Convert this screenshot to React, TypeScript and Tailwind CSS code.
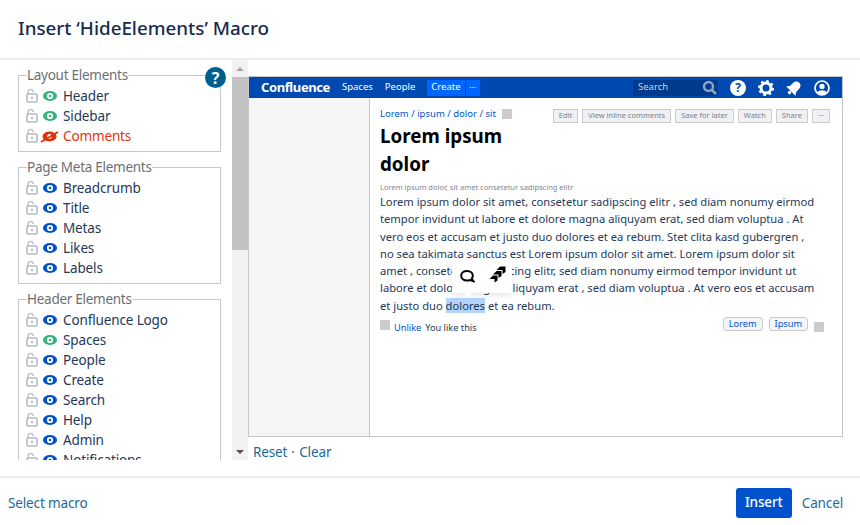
import React from 'react';

const layoutItems = [
    { label: 'Header', state: 'green' },
    { label: 'Sidebar', state: 'green' },
    { label: 'Comments', state: 'off' },
];
const metaItems = ['Breadcrumb', 'Title', 'Metas', 'Likes', 'Labels'].map(label => ({ label, state: 'blue' }));
const headerItems = [
    { label: 'Confluence Logo', state: 'blue' },
    { label: 'Spaces', state: 'green' },
    { label: 'People', state: 'blue' },
    { label: 'Create', state: 'blue' },
    { label: 'Search', state: 'blue' },
    { label: 'Help', state: 'blue' },
    { label: 'Admin', state: 'blue' },
    { label: 'Notifications', state: 'blue' },
];

function LockIcon() {
    return (
        <svg width="12" height="14" viewBox="0 0 12 14" fill="none" className="shrink-0">
            <path d="M2 5V3a2.6 2.6 0 0 1 5.200 0" stroke="#b3bac5" strokeWidth="1.300" />
            <rect x="1" y="5" width="10" height="8" rx="1" stroke="#b3bac5" strokeWidth="1.600" />
            <rect x="5" y="8" width="2" height="2" fill="#b3bac5" />
        </svg>
    );
}

function EyeIcon({ state }: { state: string }) {
    if (state === 'off') {
        return (
            <svg width="19" height="13" viewBox="0 0 19 13" className="shrink-0 -ml-[2px] mr-[-1px]">
                <ellipse cx="9.500" cy="6.500" rx="7" ry="5" fill="#de350b" />
                <circle cx="9.500" cy="6.500" r="2.400" fill="#fff" />
                <path d="M1 12 18 2" stroke="#de350b" strokeWidth="2" />
            </svg>
        );
    }
    const color = state === 'green' ? '#36b37e' : '#0052cc';
    return (
        <svg width="14" height="10" viewBox="0 0 14 10" className="shrink-0">
            <ellipse cx="7" cy="5" rx="7" ry="5" fill={color} />
            <circle cx="7" cy="5" r="3.100" fill="#fff" />
            <circle cx="7" cy="5" r="1.300" fill={color} />
        </svg>
    );
}

function ElementGroup({ title, items, className }: { title: string; items: { label: string; state: string }[]; className?: string }) {
    return (
        <fieldset className={`ml-[18px] w-[203px] border border-[#c6c8ca] pb-[5px] ${className ?? ''}`}>
            <legend className="ml-2 text-[13.500px] leading-[16px] tracking-[-0.27px] text-[#6b6f76]">{title}</legend>
            <div className="mt-[3px]">
                {items.map(item => (
                    <div key={item.label} className="flex h-5 items-center pl-[7px]">
                        <LockIcon />
                        <span className="ml-[5px] flex w-[14px] justify-center"><EyeIcon state={item.state} /></span>
                        <span className={`ml-[6px] whitespace-nowrap ${item.state === 'off' ? 'text-[#de350b]' : 'text-[#253858]'}`}>{item.label}</span>
                    </div>
                ))}
            </div>
        </fieldset>
    );
}

function Scrollbar() {
    return (
        <div className="flex w-4 shrink-0 flex-col items-center bg-[#f1f1f1]">
            <div className="flex h-[17px] items-center justify-center">
                <div className="h-0 w-0 border-x-[4px] border-b-[4px] border-x-transparent border-b-[#a3a3a3]" />
            </div>
            <div className="h-[173px] w-full bg-[#c1c1c1]" />
            <div className="flex-1" />
            <div className="flex h-[17px] items-center justify-center">
                <div className="h-0 w-0 border-x-[4px] border-t-[4px] border-x-transparent border-t-[#505050]" />
            </div>
        </div>
    );
}

function NavIcons() {
    return (
        <div className="ml-[12px] flex items-center gap-[12px]">
            <span className="flex h-[16px] w-[16px] items-center justify-center rounded-full bg-white text-[12px] font-bold leading-none text-[#0049b0]">?</span>
            <svg width="16" height="16" viewBox="0 0 16 16">
                <circle cx="8" cy="8" r="5" fill="none" stroke="#fff" strokeWidth="3" />
                <circle cx="8" cy="8" r="7" fill="none" stroke="#fff" strokeWidth="2" strokeDasharray="2.600 2.900" />
            </svg>
            <svg width="16" height="16" viewBox="0 0 16 16">
                <g transform="rotate(45 8 8)">
                    <path d="M8 0.500c-2.800 0-4.300 2.200-4.300 5V9L1.500 12.500h13L12.300 9V5.500C12.300 2.700 10.800 0.500 8 0.500z" fill="#fff" />
                    <circle cx="8" cy="14.300" r="1.700" fill="#fff" />
                </g>
            </svg>
            <svg width="16" height="16" viewBox="0 0 16 16">
                <circle cx="8" cy="8" r="7" fill="none" stroke="#fff" strokeWidth="1.700" />
                <circle cx="8" cy="6.400" r="2.600" fill="#fff" />
                <path d="M3.500 12.500c1-3 8-3 9 0L8 15z" fill="#fff" />
            </svg>
        </div>
    );
}

function ActionButton({ children }: { children: React.ReactNode }) {
    return (
        <span className="flex h-[14px] items-center whitespace-nowrap border border-[#c9cbcf] bg-[#f0f1f3] px-[5px] text-[7.500px] text-[#7a8090]">{children}</span>
    );
}

function Preview() {
    return (
        <div className="relative flex h-[361px] w-[595px] flex-col border border-[#c4c6c9] tracking-normal">
            <div className="flex h-[21px] shrink-0 items-center bg-[#0049b0] pl-[12px] pr-[12px] text-[9.500px] text-white">
                <span className="text-[13px] font-bold tracking-[-0.4px]">Confluence</span>
                <span className="ml-[12px]">Spaces</span>
                <span className="ml-[12px]">People</span>
                <span className="ml-[12px] flex h-[16px] items-center bg-[#0065ff] px-[4px]">Create</span>
                <span className="ml-[1px] flex h-[16px] w-[14px] items-center justify-center bg-[#0065ff] text-[8px] leading-none">···</span>
                <div className="ml-auto flex h-[16px] w-[85px] items-center justify-between bg-[#003a8c] pl-[5px] pr-[1px] text-[#c7d3e8]">
                    <span>Search</span>
                    <svg width="15" height="15" viewBox="0 0 15 15" fill="none">
                        <circle cx="6.500" cy="6.500" r="4.500" stroke="#8fa3c4" strokeWidth="2.400" />
                        <path d="m10 10 4 4" stroke="#8fa3c4" strokeWidth="2.600" />
                    </svg>
                </div>
                <NavIcons />
            </div>
            <div className="flex min-h-0 flex-1">
                <div className="w-[121px] shrink-0 border-r border-[#c4c6c9] bg-[#f5f5f5]" />
                <div className="relative flex-1 pl-[10px] pr-[12px] pt-[10px]">
                    <div className="flex items-start justify-between">
                        <div className="w-[170px]">
                            <div className="flex h-[12px] items-center whitespace-nowrap text-[9.500px] text-[#0052cc]">
                                Lorem / ipsum / dolor / sit
                                <span className="ml-[6px] h-[10px] w-[10px] bg-[#cccccc]" />
                            </div>
                            <h1 className="mt-[2px] w-[130px] text-[18.800px] font-bold leading-[28px] text-black">Lorem ipsum dolor</h1>
                        </div>
                        <div className="flex gap-[4px] pt-px">
                            <ActionButton>Edit</ActionButton>
                            <ActionButton>View inline comments</ActionButton>
                            <ActionButton>Save for later</ActionButton>
                            <ActionButton>Watch</ActionButton>
                            <ActionButton>Share</ActionButton>
                            <ActionButton>···</ActionButton>
                        </div>
                    </div>
                    <div className="mt-[4px] whitespace-nowrap text-[7.500px] leading-[10px] text-[#7f8590]">Lorem ipsum dolor, sit amet consetetur sadipscing elitr</div>
                    <p className="relative mt-[1px] whitespace-nowrap text-[11.200px] leading-[17.300px] text-[#253858]">
                        Lorem ipsum dolor sit amet, consetetur sadipscing elitr , sed diam nonumy eirmod<br />
                        tempor invidunt ut labore et dolore magna aliquyam erat, sed diam voluptua . At<br />
                        vero eos et accusam et justo duo dolores et ea rebum. Stet clita kasd gubergren ,<br />
                        no sea takimata sanctus est Lorem ipsum dolor sit amet. Lorem ipsum dolor sit<br />
                        amet , consetetur sadipscing elitr, sed diam nonumy eirmod tempor invidunt ut<br />
                        labore et dolore magna aliquyam erat , sed diam voluptua . At vero eos et accusam<br />
                        et justo duo <span className="bg-[#b3d4ff]">dolores</span> et ea rebum.
                    </p>
                    <div className="mr-[6px] mt-[3px] flex items-start text-[9.200px]">
                        <span className="mt-[3px] h-[10px] w-[10px] bg-[#cccccc]" />
                        <span className="ml-[4px] mt-[4px] text-[#0052cc]">Unlike</span>
                        <span className="ml-[4px] mt-[4px] text-[#253858]">You like this</span>
                        <span className="ml-auto flex h-[14px] items-center rounded-[3px] border border-[#c9cbcf] bg-[#f4f5f7] px-[5px] text-[#0052cc]">Lorem</span>
                        <span className="ml-[6px] flex h-[14px] items-center rounded-[3px] border border-[#c9cbcf] bg-[#f4f5f7] px-[5px] text-[#0052cc]">Ipsum</span>
                        <span className="ml-[6px] mt-[5px] h-[10px] w-[10px] bg-[#cccccc]" />
                    </div>
                    <div className="absolute left-[82px] top-[161px] flex h-[34px] w-[60px] items-center gap-[14px] bg-white pl-[8px] shadow-[0_2px_6px_rgba(9,30,66,0.12)]">
                        <span className="absolute bottom-[-3px] left-[12px] h-[7px] w-[7px] rotate-45 bg-white" />
                        <svg width="15" height="13" viewBox="0 0 15 13" fill="none" className="relative mt-[1px]">
                            <path d="M7 1c3.300 0 5.800 1.900 5.800 4.700 0 1.100-.4 2-1 2.800l1.700 2.700-3.500-1.200c-.9.400-1.900.6-3 .6-3.300 0-5.800-2-5.800-4.900S3.700 1 7 1z" stroke="#000" strokeWidth="2" />
                        </svg>
                        <svg width="17" height="17" viewBox="0 0 17 17" fill="#000" className="relative -mt-[3px]">
                            <path d="M7.500 4 11 .5h5.500V6l-3 2V4z" />
                            <path d="M4 8.500 7.500 5h5V10l-3 2V8.500z" />
                            <path d="M.5 13 4 9.500h4.500v5l-3 2V13z" />
                        </svg>
                    </div>
                </div>
            </div>
        </div>
    );
}

export default function App() {
    return (
        <div className="flex h-[525px] w-[860px] flex-col overflow-hidden bg-white font-['Noto_Sans','Open_Sans',sans-serif] text-[13.500px] tracking-[-0.13px]">
            <header className="flex h-[60px] shrink-0 items-center border-b-2 border-[#ebecf0] pb-[2px] pl-[18px]">
                <h2 className="text-[18.800px] font-medium tracking-normal text-[#172b4d]">Insert ‘HideElements’ Macro</h2>
            </header>
            <main className="flex h-[400px] shrink-0">
                <div className="relative w-[232px] shrink-0 overflow-hidden pt-[7px]">
                    <ElementGroup title="Layout Elements" items={layoutItems} />
                    <ElementGroup title="Page Meta Elements" items={metaItems} className="mt-[7px]" />
                    <ElementGroup title="Header Elements" items={headerItems} className="mt-[7px]" />
                    <span className="absolute left-[205px] top-[7px] flex h-[21px] w-[21px] items-center justify-center rounded-full bg-[#005f8f] text-[16px] font-bold leading-none text-white">?</span>
                </div>
                <Scrollbar />
                <div className="flex-1 pt-[16px]">
                    <Preview />
                    <div className="ml-[5px] mt-[5px] text-[#1a6a96]">
                        Reset<span className="ml-[4px] mr-[1px] text-[#505f79]">·</span> Clear
                    </div>
                </div>
            </main>
            <footer className="mt-[16px] flex flex-1 items-center border-t-2 border-[#ebecf0] pl-2 pr-[17px] pt-[2px]">
                <span className="mt-[1px] text-[#1a6a96]">Select macro</span>
                <button className="ml-auto h-[30px] w-[56px] rounded-[3px] bg-[#0052cc] font-medium text-white">Insert</button>
                <span className="ml-[10px] mt-[1px] text-[#1a6a96]">Cancel</span>
            </footer>
        </div>
    );
}
